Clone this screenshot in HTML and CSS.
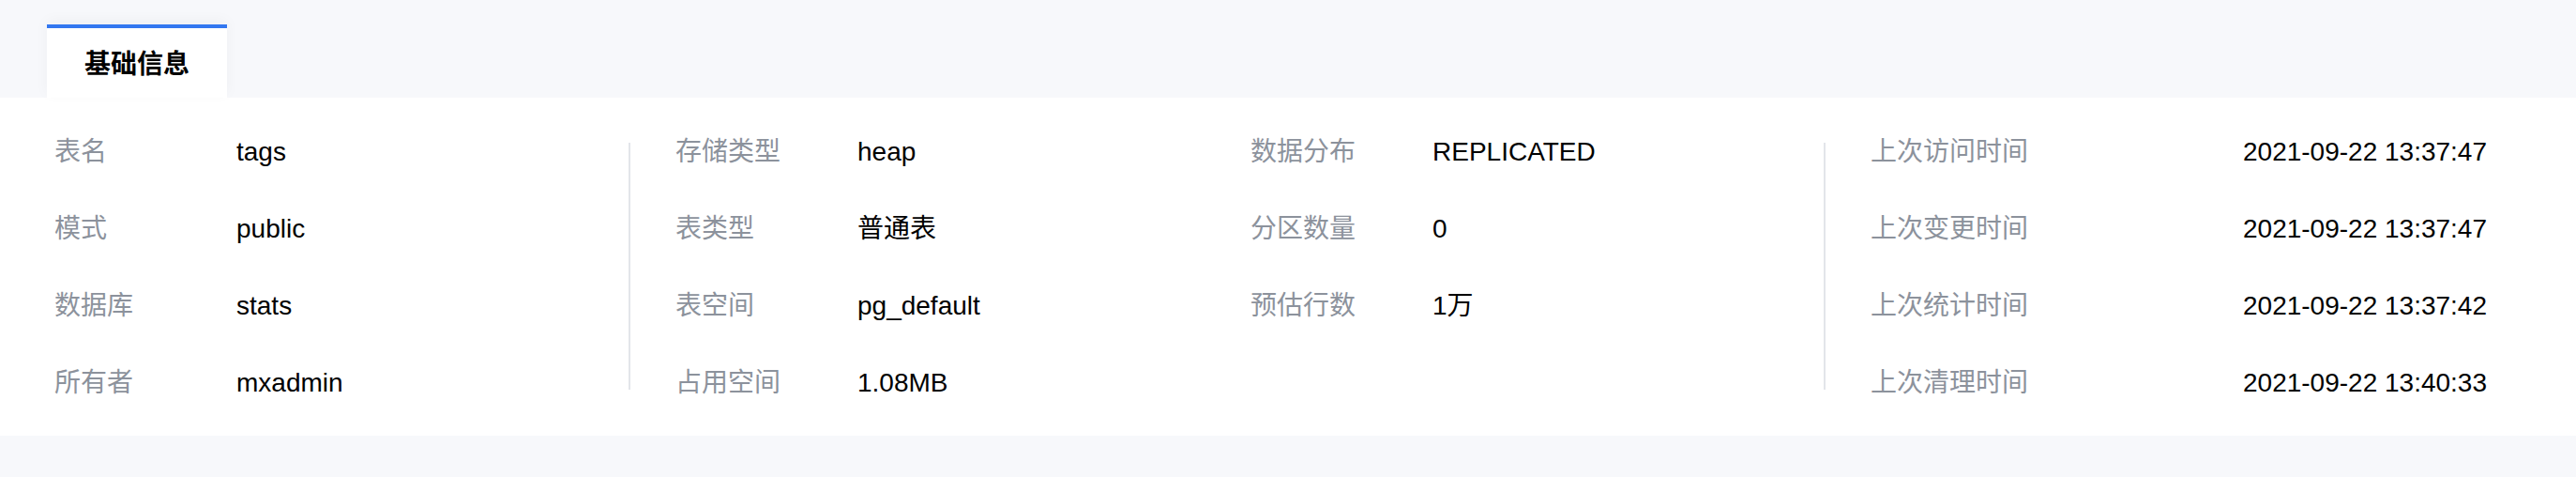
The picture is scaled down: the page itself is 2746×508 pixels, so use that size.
FILE: index.html
```html
<!DOCTYPE html>
<html lang="zh-CN">
<head>
<meta charset="utf-8">
<title>基础信息</title>
<link rel="stylesheet" href="styles.css">
</head>
<body>
<div class="tabs">
  <div class="tab">基础信息</div>
</div>
<div class="panel">
  <div class="group g1">
    <div class="col">
      <div class="row"><span class="label">表名</span><span class="value">tags</span></div>
      <div class="row"><span class="label">模式</span><span class="value">public</span></div>
      <div class="row"><span class="label">数据库</span><span class="value">stats</span></div>
      <div class="row"><span class="label">所有者</span><span class="value">mxadmin</span></div>
    </div>
  </div>
  <div class="sep"></div>
  <div class="group g2">
    <div class="col c2">
      <div class="row"><span class="label">存储类型</span><span class="value">heap</span></div>
      <div class="row"><span class="label">表类型</span><span class="value">普通表</span></div>
      <div class="row"><span class="label">表空间</span><span class="value">pg_default</span></div>
      <div class="row"><span class="label">占用空间</span><span class="value">1.08MB</span></div>
    </div>
    <div class="col c3">
      <div class="row"><span class="label">数据分布</span><span class="value">REPLICATED</span></div>
      <div class="row"><span class="label">分区数量</span><span class="value">0</span></div>
      <div class="row"><span class="label">预估行数</span><span class="value">1万</span></div>
    </div>
  </div>
  <div class="sep"></div>
  <div class="group g3">
    <div class="col">
      <div class="row"><span class="label wide">上次访问时间</span><span class="value">2021-09-22 13:37:47</span></div>
      <div class="row"><span class="label wide">上次变更时间</span><span class="value">2021-09-22 13:37:47</span></div>
      <div class="row"><span class="label wide">上次统计时间</span><span class="value">2021-09-22 13:37:42</span></div>
      <div class="row"><span class="label wide">上次清理时间</span><span class="value">2021-09-22 13:40:33</span></div>
    </div>
  </div>
</div>
</body>
</html>
```

FILE: styles.css
```css
html, body {
  margin: 0;
  padding: 0;
}

body {
  background: #f7f8fb;
  font-family: "Liberation Sans", Arial, "Noto Sans CJK SC", sans-serif;
  color: #000;
  height: 508px;
  overflow: hidden;
}

.tabs {
  height: 104px;
  display: flex;
  align-items: flex-end;
  padding-left: 50px;
  box-sizing: border-box;
}

.tab {
  width: 192px;
  height: 78px;
  box-sizing: border-box;
  border-top: 4px solid #3377f0;
  background: #fff;
  display: flex;
  align-items: center;
  justify-content: center;
  font-size: 28px;
  font-weight: bold;
  color: #000;
  box-shadow: 0 -4px 14px rgba(20, 30, 60, 0.04);
  padding-bottom: 2px;
}

.panel {
  background: #fff;
  display: flex;
  align-items: stretch;
  padding: 44px 0 42px 58px;
}

.group {
  display: flex;
}

.g1 {
  width: 612px;
}

.g2 {
  padding-left: 48px;
}

.g3 {
  padding-left: 48px;
}

.c2 {
  width: 613px;
}

.c3 {
  width: 611px;
}

.col {
  display: flex;
  flex-direction: column;
  gap: 54px;
}

.row {
  display: flex;
  font-size: 28px;
  line-height: 28px;
  height: 28px;
  white-space: nowrap;
}

.label {
  width: 194px;
  flex: none;
  color: #8c929c;
}

.label.wide {
  width: 397px;
}

.value {
  color: #000;
}

.sep {
  width: 2px;
  flex: none;
  background: #e3e5ea;
  margin: 4px 0 7px;
}
```
